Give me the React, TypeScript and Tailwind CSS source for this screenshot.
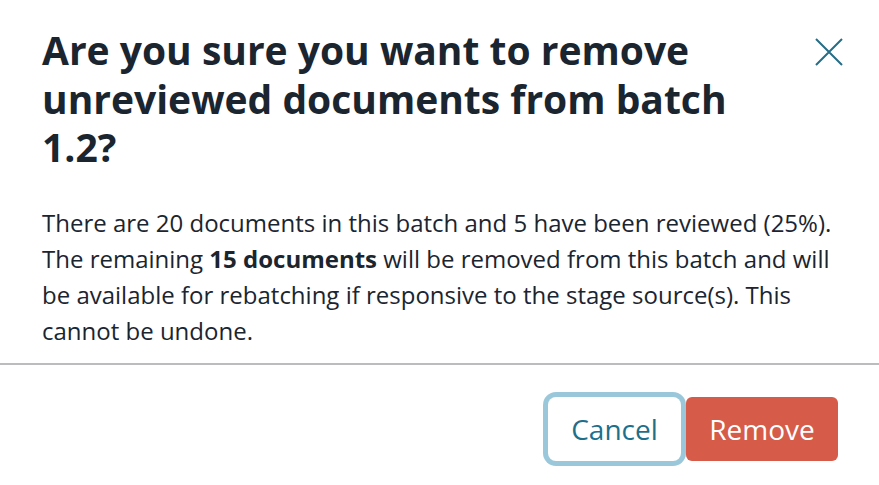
import React from "react";

export default function App() {
  return (
    <div
      className="w-[879px] h-[485px] bg-white text-[#1b2530] overflow-hidden"
      style={{ fontFamily: '"Open Sans", sans-serif' }}
    >
      <div className="flex items-start pl-[42px] pr-[32px] pt-[26px]">
        <h2 className="flex-1 max-w-[730px] text-[39px] leading-[48.6px] font-bold">
          Are you sure you want to remove unreviewed documents from batch 1.2?
        </h2>
        <button className="ml-auto mt-[8px] w-[36px] h-[36px] flex items-center justify-center text-[#266d85]">
          <svg width="28" height="28" viewBox="0 0 28 28" fill="none" stroke="currentColor" strokeWidth="2">
            <path d="M1 1 L27 27 M27 1 L1 27" />
          </svg>
        </button>
      </div>
      <p className="pl-[42px] pr-[38px] mt-[33px] text-[24px] leading-[36px]">
        There are 20 documents in this batch and 5 have been reviewed (25%). The remaining{" "}
        <span className="font-bold">15 documents</span> will be removed from this batch and will be
        available for rebatching if responsive to the stage source(s). This cannot be undone.
      </p>
      <div className="mt-[14px] h-[2px] bg-[#bcbcbf]" />
      <div className="flex justify-end gap-[5px] pr-[41px] pt-[32px]">
        <button className="w-[133px] h-[64px] rounded-[8px] bg-white text-[#1f6f8b] text-[28px] ring-[5px] ring-[#9ac8da]">
          Cancel
        </button>
        <button className="w-[152px] h-[64px] rounded-[6px] bg-[#d65b49] text-white text-[28px]">
          Remove
        </button>
      </div>
    </div>
  );
}
